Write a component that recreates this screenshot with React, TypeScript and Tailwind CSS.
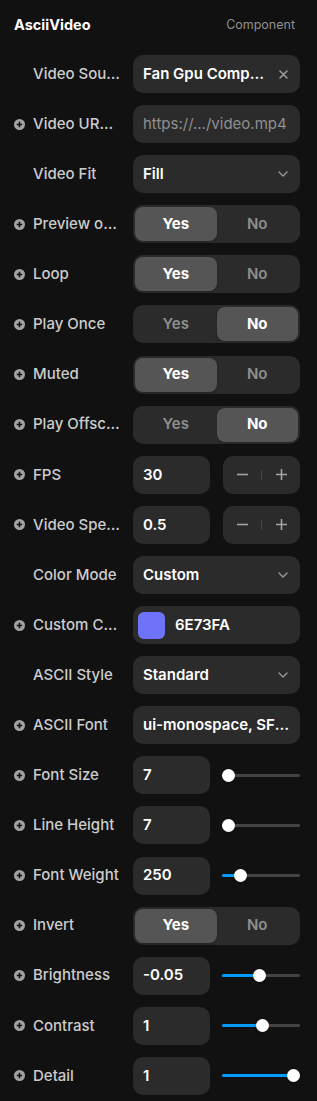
import React from "react";

type Row =
  | { kind: "chip"; label: string; plus?: boolean; value: string }
  | { kind: "text"; label: string; plus?: boolean; value: string; placeholder?: boolean }
  | { kind: "select"; label: string; plus?: boolean; value: string }
  | { kind: "toggle"; label: string; plus?: boolean; yes: boolean }
  | { kind: "stepper"; label: string; plus?: boolean; value: string }
  | { kind: "color"; label: string; plus?: boolean; value: string; color: string }
  | { kind: "slider"; label: string; plus?: boolean; value: string; pct: number };

const rows: Row[] = [
  { kind: "chip", label: "Video Source", value: "Fan Gpu Component" },
  { kind: "text", label: "Video URL Override", plus: true, value: "https://.../video.mp4", placeholder: true },
  { kind: "select", label: "Video Fit", value: "Fill" },
  { kind: "toggle", label: "Preview on Canvas", plus: true, yes: true },
  { kind: "toggle", label: "Loop", plus: true, yes: true },
  { kind: "toggle", label: "Play Once", plus: true, yes: false },
  { kind: "toggle", label: "Muted", plus: true, yes: true },
  { kind: "toggle", label: "Play Offscreen", plus: true, yes: false },
  { kind: "stepper", label: "FPS", plus: true, value: "30" },
  { kind: "stepper", label: "Video Speed", plus: true, value: "0.5" },
  { kind: "select", label: "Color Mode", value: "Custom" },
  { kind: "color", label: "Custom Color", plus: true, value: "6E73FA", color: "#6e73fa" },
  { kind: "select", label: "ASCII Style", value: "Standard" },
  { kind: "text", label: "ASCII Font", plus: true, value: "ui-monospace, SFMono-Regular" },
  { kind: "slider", label: "Font Size", plus: true, value: "7", pct: 0 },
  { kind: "slider", label: "Line Height", plus: true, value: "7", pct: 0 },
  { kind: "slider", label: "Font Weight", plus: true, value: "250", pct: 0.19 },
  { kind: "toggle", label: "Invert", plus: true, yes: true },
  { kind: "slider", label: "Brightness", plus: true, value: "-0.05", pct: 0.48 },
  { kind: "slider", label: "Contrast", plus: true, value: "1", pct: 0.52 },
  { kind: "slider", label: "Detail", plus: true, value: "1", pct: 1 },
];

const PlusIcon = () => (
  <svg width="11" height="11" viewBox="0 0 11 11" className="shrink-0">
    <circle cx="5.5" cy="5.5" r="5.5" fill="#a3a3a3" />
    <path d="M5.5 2.8v5.4M2.8 5.5h5.4" stroke="#111111" strokeWidth="1.6" />
  </svg>
);

const Chevron = () => (
  <svg width="10" height="6" viewBox="0 0 10 6" className="shrink-0">
    <path d="M1 1l4 4 4-4" fill="none" stroke="#999999" strokeWidth="1.4" strokeLinecap="round" strokeLinejoin="round" />
  </svg>
);

const Control = ({ row }: { row: Row }) => {
  const box = "h-[38px] rounded-[10px] bg-[#2b2b2b] flex items-center";

  if (row.kind === "chip") {
    return (
      <div className={`${box} pl-[10px] pr-[12px] gap-2`}>
        <span className="flex-1 min-w-0 truncate font-semibold text-white">{row.value}</span>
        <svg width="9" height="9" viewBox="0 0 9 9" className="shrink-0">
          <path d="M1 1l7 7M8 1l-7 7" stroke="#9a9a9a" strokeWidth="1.6" strokeLinecap="round" />
        </svg>
      </div>
    );
  }

  if (row.kind === "text") {
    return (
      <div className={`${box} px-[10px]`}>
        <span className={`min-w-0 truncate ${row.placeholder ? "text-[#8f8f8f]" : "font-semibold text-white"}`}>
          {row.value}
        </span>
      </div>
    );
  }

  if (row.kind === "select") {
    return (
      <div className={`${box} pl-[10px] pr-[12px]`}>
        <span className="flex-1 min-w-0 truncate font-semibold text-white">{row.value}</span>
        <Chevron />
      </div>
    );
  }

  if (row.kind === "toggle") {
    const on = "bg-[#555555] text-white font-bold rounded-[8px] shadow-sm";
    const off = "text-[#8f8f8f] font-semibold";
    return (
      <div className={`${box} p-[2px]`}>
        <div className={`w-1/2 h-full flex items-center justify-center ${row.yes ? on : off}`}>Yes</div>
        <div className={`w-1/2 h-full flex items-center justify-center ${row.yes ? off : on}`}>No</div>
      </div>
    );
  }

  if (row.kind === "color") {
    return (
      <div className={`${box} pl-[5px] gap-[10px]`}>
        <div className="w-[27px] h-[27px] rounded-[6px]" style={{ backgroundColor: row.color }} />
        <span className="font-semibold text-white">{row.value}</span>
      </div>
    );
  }

  if (row.kind === "stepper") {
    return (
      <div className="flex justify-between">
        <div className={`${box} w-[77px] px-[10px] font-semibold text-white`}>{row.value}</div>
        <div className={`${box} w-[77px]`}>
          <div className="w-[38px] flex justify-center">
            <svg width="13" height="13" viewBox="0 0 13 13">
              <path d="M1 6.5h11" stroke="#a3a3a3" strokeWidth="1.6" />
            </svg>
          </div>
          <div className="w-px h-[10px] bg-[#444444]" />
          <div className="w-[38px] flex justify-center">
            <svg width="13" height="13" viewBox="0 0 13 13">
              <path d="M1 6.5h11M6.5 1v11" stroke="#a3a3a3" strokeWidth="1.6" />
            </svg>
          </div>
        </div>
      </div>
    );
  }

  // slider
  const thumbLeft = `calc(${row.pct} * (100% - 13px))`;
  const fill = `calc(${row.pct} * (100% - 13px) + 6.5px)`;
  return (
    <div className="flex justify-between items-center">
      <div className={`${box} w-[77px] px-[10px] font-semibold text-white`}>{row.value}</div>
      <div className="w-[78px] relative h-[13px] flex items-center">
        <div className="w-full h-[3px] rounded-full bg-[#444444]" />
        <div className="absolute left-0 h-[3px] rounded-full bg-[#0099ff]" style={{ width: fill }} />
        <div className="absolute w-[13px] h-[13px] rounded-full bg-white shadow" style={{ left: thumbLeft }} />
      </div>
    </div>
  );
};

export default function App() {
  return (
    <div
      className="min-h-screen bg-[#111111] text-[15px] pl-[14px] pr-[17px] pb-[8px]"
      style={{ fontFamily: "Inter, 'Liberation Sans', sans-serif" }}
    >
      <div className="h-[50px] flex items-center justify-between pr-[5px]">
        <span className="font-bold text-white text-[14.5px]">AsciiVideo</span>
        <span className="text-[12.5px] text-[#8f8f8f]">Component</span>
      </div>
      <div className="flex flex-col gap-[12.1px] pt-[5px]">
        {rows.map((row) => (
          <div key={row.label} className="flex items-center">
            <div className="w-[119px] shrink-0 flex items-center gap-[8px] pr-[13px]">
              {row.plus ? <PlusIcon /> : <div className="w-[11px] shrink-0" />}
              <span className="min-w-0 truncate text-[#cccccc] font-medium">{row.label}</span>
            </div>
            <div className="w-[167px] shrink-0">
              <Control row={row} />
            </div>
          </div>
        ))}
      </div>
    </div>
  );
}
